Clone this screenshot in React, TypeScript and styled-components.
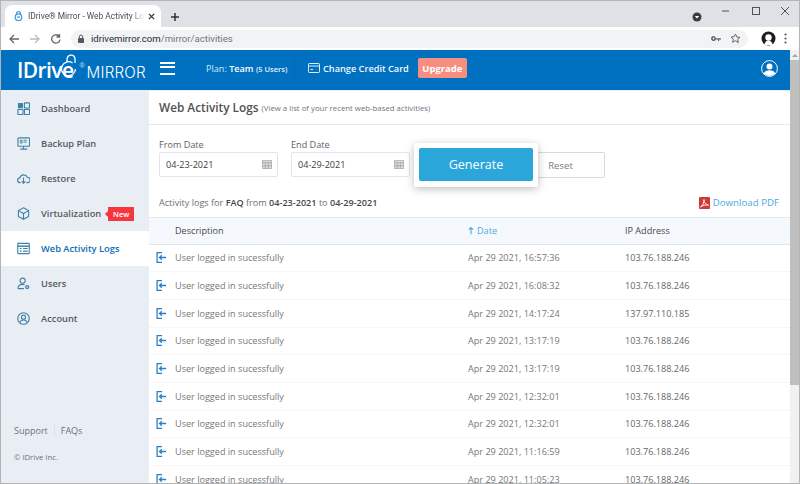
import React from 'react';
import styled, { createGlobalStyle } from 'styled-components';

const Global = createGlobalStyle`
	html, body {
		margin: 0;
		padding: 0;
		height: 484px;
		overflow: hidden;
		background: #fff;
	}
	* {
		box-sizing: border-box;
	}
`;

const Window = styled.div`
	width: 800px;
	height: 484px;
	display: flex;
	flex-direction: column;
	border: 1px solid #b4b4b4;
	font-family: 'Open Sans', sans-serif;
	overflow: hidden;
`;

const TabStrip = styled.div`
	height: 26px;
	flex: none;
	background: #dee1e6;
	display: flex;
	align-items: flex-end;
	padding-left: 4px;
	color: #3c4043;
`;

const Tab = styled.div`
	width: 156px;
	height: 22px;
	background: #fff;
	border-radius: 7px 7px 0 0;
	display: flex;
	align-items: center;
	padding: 0 6px 0 9px;
	font: 8.4px Roboto, sans-serif;
	color: #4a4d50;
`;

const TabTitle = styled.span`
	flex: 1;
	margin: 0 3px 0 5px;
	white-space: nowrap;
	overflow: hidden;
	mask-image: linear-gradient(to right, #000 88%, transparent);
`;

const NewTab = styled.svg`
	margin-left: 9px;
	margin-bottom: 5px;
`;

const WindowControls = styled.div`
	margin-left: auto;
	align-self: stretch;
	display: flex;
	align-items: flex-start;
	padding: 4px 8px 0 0;
	gap: 17px;
`;

const ProfileDot = styled.svg`
	margin: 7px 2px 0 0;
`;

const Toolbar = styled.div`
	height: 23px;
	flex: none;
	background: #fff;
	display: flex;
	align-items: center;
	padding: 0 7px 0 7px;
`;

const NavIcons = styled.div`
	display: flex;
	gap: 9px;
	width: 63px;
	flex: none;
`;

const Omnibox = styled.div`
	width: 677px;
	height: 18px;
	border-radius: 9px;
	background: #f1f3f4;
	display: flex;
	align-items: center;
	padding: 0 7px 0 6px;
	font: 9.6px Roboto, sans-serif;
	color: #70757a;
`;

const Url = styled.span`
	margin-left: 6px;
	b {
		font-weight: 400;
		color: #27292c;
	}
`;

const OmniIcons = styled.div`
	margin-left: auto;
	display: flex;
	align-items: center;
	gap: 9px;
`;

const ToolEnd = styled.div`
	margin-left: 13px;
	display: flex;
	align-items: center;
	gap: 8px;
`;

const Main = styled.div`
	flex: 1;
	min-height: 0;
	display: flex;
`;

const Page = styled.div`
	width: 789px;
	flex: none;
	display: flex;
	flex-direction: column;
`;

const Scrollbar = styled.div`
	flex: 1;
	background: #f1f1f1;
	display: flex;
	flex-direction: column;
	align-items: center;
`;

const ScrollUp = styled.div`
	height: 10px;
	flex: none;
	display: flex;
	align-items: center;
	justify-content: center;
	&::before {
		content: '';
		border-left: 3px solid transparent;
		border-right: 3px solid transparent;
		border-bottom: 3px solid #a3a3a3;
	}
`;

const ScrollThumb = styled.div`
	width: 100%;
	height: 325px;
	background: #bfbfbf;
`;

const Header = styled.header`
	height: 40px;
	flex: none;
	background: #0070c0;
	display: flex;
	align-items: center;
	color: #fff;
	padding: 0 12px 4px 0;
`;

const Logo = styled.div`
	width: 159px;
	flex: none;
	margin-top: 4px;
	padding-left: 16px;
	display: flex;
	align-items: baseline;
	white-space: nowrap;
`;

const LogoMark = styled.span`
	font: 600 21px 'Open Sans', sans-serif;
	letter-spacing: -0.6px;
	position: relative;
`;

const LogoLock = styled.svg`
	position: absolute;
	right: -4px;
	top: -2px;
`;

const LogoReg = styled.sup`
	font: 400 7px 'Liberation Sans', sans-serif;
	align-self: flex-start;
	margin: 6px 2px 0 6px;
	color: #cfe3f3;
`;

const LogoName = styled.span`
	font: 300 15.2px 'Inter', sans-serif;
	letter-spacing: 0.2px;
`;

const Burger = styled.button`
	width: 15px;
	height: 13px;
	padding: 0;
	border: 0;
	border-top: 2px solid #fff;
	border-bottom: 2px solid #fff;
	background: none;
	position: relative;
	flex: none;
	&::before {
		content: '';
		position: absolute;
		left: 0;
		right: 0;
		top: 2.5px;
		height: 2px;
		background: #fff;
	}
`;

const Plan = styled.div`
	margin-left: 31px;
	width: 88px;
	font-size: 9.1px;
	color: #d9e9f6;
	white-space: nowrap;
	strong {
		color: #fff;
		font-weight: 600;
	}
	small {
		font-size: 7.5px;
		font-weight: 600;
		color: #e6f0f9;
	}
`;

const Divider = styled.div`
	width: 1px;
	height: 26px;
	background: #0a66ac;
	flex: none;
`;

const CardLink = styled.a`
	margin-left: 13px;
	display: flex;
	align-items: center;
	gap: 3px;
	font-size: 9.2px;
	font-weight: 600;
	color: #f3f8fc;
	white-space: nowrap;
`;

const Upgrade = styled.button`
	margin-left: 9px;
	width: 49px;
	height: 20px;
	padding: 0;
	border: 0;
	border-radius: 2px;
	background: #f78e7f;
	color: #fff;
	font: 700 9.5px 'Open Sans', sans-serif;
`;

const UserButton = styled.div`
	margin-left: auto;
	display: flex;
`;

const Body = styled.div`
	flex: 1;
	min-height: 0;
	display: flex;
`;

const Sidebar = styled.nav`
	width: 148px;
	flex: none;
	background: #e9eef4;
	display: flex;
	flex-direction: column;
	padding-top: 1px;
`;

const NavItem = styled.a<{ $active?: boolean }>`
	height: 35px;
	flex: none;
	display: flex;
	align-items: center;
	padding-left: 16px;
	gap: 11px;
	font-size: 9.3px;
	font-weight: 600;
	background: ${p => (p.$active ? '#fff' : 'transparent')};
	color: ${p => (p.$active ? '#0a6cb5' : '#55595d')};
`;

const NavIcon = styled.svg`
	width: 13px;
	height: 13px;
	flex: none;
	fill: none;
	stroke: #3f82a8;
	stroke-width: 1.2;
`;

const NewBadge = styled.span`
	margin-left: -4px;
	width: 26px;
	height: 14px;
	background: #f8363f;
	color: #fff;
	font-size: 7.5px;
	font-weight: 600;
	display: flex;
	align-items: center;
	justify-content: center;
	position: relative;
	&::before {
		content: '';
		position: absolute;
		left: -3px;
		top: 4px;
		border-top: 3px solid transparent;
		border-bottom: 3px solid transparent;
		border-right: 3px solid #f8363f;
	}
`;

const SideFoot = styled.div`
	margin-top: auto;
	padding: 0 0 21px 13px;
	color: #6d7276;
`;

const FootLinks = styled.div`
	display: flex;
	align-items: center;
	font-size: 9px;
	margin-bottom: 15px;
`;

const FootLink = styled.a`
	& + & {
		margin-left: 6px;
		padding-left: 6px;
		border-left: 1px solid #dde2e8;
	}
`;

const Copy = styled.div`
	font-size: 7.7px;
`;

const Content = styled.main`
	flex: 1;
	min-width: 0;
	position: relative;
	overflow: hidden;
	display: flex;
	flex-direction: column;
`;

const TitleBar = styled.div`
	height: 35px;
	flex: none;
	border-top: 1px solid #e9eef4;
	border-bottom: 1px solid #e2e9f0;
	padding: 0 0 2px 10px;
	display: flex;
	align-items: center;
	gap: 3px;
`;

const Title = styled.h1`
	margin: 0;
	font-size: 11.8px;
	font-weight: 600;
	color: #4f5154;
`;

const Subtitle = styled.span`
	font-size: 7.8px;
	color: #70757a;
	margin-top: 2px;
`;

const Filters = styled.div`
	flex: none;
	display: flex;
	align-items: flex-end;
	gap: 13px;
	padding: 13px 0 0 10px;
`;

const Field = styled.label`
	display: flex;
	flex-direction: column;
	font-size: 9.1px;
	line-height: 14px;
	color: #5d6165;
`;

const DateBox = styled.div`
	width: 119px;
	height: 25px;
	border: 1px solid #dfe6ee;
	border-radius: 2px;
	padding: 0 5px 0 6px;
	display: flex;
	align-items: center;
	justify-content: space-between;
	font-size: 9.1px;
	color: #3d4043;
`;

const Reset = styled.button`
	width: 89px;
	height: 26px;
	margin-left: 93px;
	margin-bottom: -1px;
	padding: 0;
	border: 1px solid #d5dae0;
	border-radius: 2px;
	background: #fff;
	color: #7c8084;
	font: 9.6px 'Open Sans', sans-serif;
`;

const Spotlight = styled.div`
	position: absolute;
	left: 265px;
	top: 53px;
	width: 124px;
	height: 44px;
	background: #fff;
	box-shadow: 0 2px 8px rgba(0, 0, 0, 0.25);
	padding: 5px;
`;

const Generate = styled.button`
	width: 114px;
	height: 33px;
	border: 0;
	padding: 0;
	border-radius: 2px;
	background: #2ba6db;
	color: #fff;
	font: 12.6px 'Open Sans', sans-serif;
`;

const Summary = styled.div`
	flex: none;
	display: flex;
	align-items: center;
	justify-content: space-between;
	height: 17px;
	margin-top: 17px;
	padding: 0 11px 0 10px;
	font-size: 9.1px;
	color: #6b6f73;
	b {
		font-weight: 600;
		color: #45484b;
	}
`;

const Download = styled.a`
	display: flex;
	align-items: center;
	gap: 3px;
	font-size: 9.7px;
	color: #4ea9dd;
`;

const Table = styled.div`
	flex: none;
	margin-top: 6px;
	display: flex;
	flex-direction: column;
`;

const columns = `
	display: grid;
	grid-template-columns: 26px 293px 157px 1fr;
	align-items: center;
`;

const HeadRow = styled.div`
	${columns}
	height: 27.5px;
	flex: none;
	background: #f5f8fd;
	border-top: 1px solid #e2e8ef;
	border-bottom: 1px solid #dfe5ec;
	font-size: 9.1px;
	color: #45484b;
`;

const SortHead = styled.span`
	display: flex;
	align-items: center;
	gap: 3px;
	color: #4ea9dd;
`;

const Row = styled.div`
	${columns}
	height: 27.7px;
	flex: none;
	border-bottom: 1px solid #f5f6f7;
	font-size: 9.1px;
	color: #74787c;
`;

const LoginIcon = styled.svg`
	margin-left: 7px;
`;

const IpCell = styled.span`
	color: #63676b;
`;

const navItems = [
	{
		label: 'Dashboard',
		icon: (
			<g fill="#3f82a8" stroke="none">
				<rect x="1" y="1" width="5.5" height="5.5" rx=".6" />
				<rect x="8" y="1" width="5.5" height="5.5" rx=".6" fill="none" stroke="#3f82a8" />
				<rect x="1" y="8" width="5.5" height="5.5" rx=".6" fill="none" stroke="#3f82a8" />
				<rect x="8" y="8" width="5.5" height="5.5" rx=".6" fill="none" stroke="#3f82a8" />
			</g>
		),
	},
	{
		label: 'Backup Plan',
		icon: (
			<>
				<rect x="1" y="1" width="12.5" height="9" rx=".8" />
				<path d="M3.500 13h7.500M7 10v3" />
				<path d="M3.500 3.500h2v3h-2zM7 3.500h3.500M7 5.500h3.500" strokeWidth="1" />
			</>
		),
	},
	{
		label: 'Restore',
		icon: (
			<>
				<path d="M4 11.500H3.400a2.600 2.600 0 0 1-.3-5.200 4.200 4.200 0 0 1 8-.6 2.900 2.900 0 0 1 .2 5.800H10" />
				<path d="M7 6v6M5 10l2 2 2-2" />
			</>
		),
	},
	{
		label: 'Virtualization',
		icon: (
			<>
				<path d="M7 .9l5.500 3v6.200L7 13.200l-5.500-3.100V3.900z" />
				<path d="M1.500 3.900L7 7l5.500-3.100M7 7v6.200" />
			</>
		),
	},
	{
		label: 'Web Activity Logs',
		active: true,
		icon: (
			<>
				<rect x=".8" y="1.500" width="12.400" height="11" rx=".6" />
				<path d="M.8 4.500h12.400" strokeWidth="1.600" />
				<path d="M3 7h2M6.500 7h5M3 9.800h2M6.500 9.800h5" />
			</>
		),
	},
	{
		label: 'Users',
		icon: (
			<>
				<circle cx="6" cy="4" r="2.800" />
				<path d="M1 12.500c0-3 2-4.500 5-4.500 1 0 1.600.1 2.200.4M1 12.500h6.500" />
				<circle cx="11" cy="10.800" r="1.600" strokeWidth="1.400" />
			</>
		),
	},
	{
		label: 'Account',
		icon: (
			<>
				<circle cx="7" cy="7" r="6.200" />
				<circle cx="7" cy="5.600" r="2.200" />
				<path d="M3 11.500c.6-2 2-2.900 4-2.900s3.400.9 4 2.900" />
			</>
		),
	},
];

const logs = [
	['Apr 29 2021, 16:57:36', '103.76.188.246'],
	['Apr 29 2021, 16:08:32', '103.76.188.246'],
	['Apr 29 2021, 14:17:24', '137.97.110.185'],
	['Apr 29 2021, 13:17:19', '103.76.188.246'],
	['Apr 29 2021, 13:17:19', '103.76.188.246'],
	['Apr 29 2021, 12:32:01', '103.76.188.246'],
	['Apr 29 2021, 12:32:01', '103.76.188.246'],
	['Apr 29 2021, 11:16:59', '103.76.188.246'],
	['Apr 29 2021, 11:05:23', '103.76.188.246'],
];

const CalendarIcon = () => (
	<svg width="10" height="9" viewBox="0 0 11 10">
		<rect x=".5" y=".5" width="10" height="9" fill="#dcdddd" stroke="#b4b6b8" />
		<path d="M0 3h11M3.500 3v7M7 3v7M0 6.500h11" stroke="#9b9d9f" strokeWidth=".8" />
	</svg>
);

const App = () => (
	<>
		<Global />
		<Window>
			<TabStrip>
				<Tab>
					<svg width="9" height="12" viewBox="0 0 11 14" fill="none" stroke="#3d9be0" strokeWidth="1.500">
						<circle cx="5.500" cy="8.500" r="4" />
						<path d="M3 4.500c0-4 5-4 5 0M3.500 8.500h4" />
					</svg>
					<TabTitle>IDrive® Mirror - Web Activity Log</TabTitle>
					<svg width="7" height="7" viewBox="0 0 8 8" stroke="#33373a" strokeWidth="1.500">
						<path d="M1 1l6 6M7 1l-6 6" />
					</svg>
				</Tab>
				<NewTab width="10" height="10" viewBox="0 0 10 10" stroke="#2f3235" strokeWidth="1.500">
					<path d="M5 1v8M1 5h8" />
				</NewTab>
				<WindowControls>
					<ProfileDot width="10" height="10" viewBox="0 0 10 10">
						<circle cx="5" cy="5" r="4.500" fill="#3a3d40" />
						<path d="M2.800 4h4.400L5 6.500z" fill="#fff" />
					</ProfileDot>
					<svg width="12" height="12" viewBox="0 0 12 12" stroke="#50545a">
						<path d="M1 6h7" />
					</svg>
					<svg width="12" height="12" viewBox="0 0 12 12" fill="none" stroke="#50545a">
						<rect x="2.500" y="2.500" width="7" height="7" />
					</svg>
					<svg width="12" height="12" viewBox="0 0 12 12" stroke="#50545a">
						<path d="M2 2l8 8M10 2l-8 8" />
					</svg>
				</WindowControls>
			</TabStrip>
			<Toolbar>
				<NavIcons>
					<svg width="12" height="12" viewBox="0 0 12 12" fill="none" stroke="#63676b" strokeWidth="1.300">
						<path d="M11 6H2M6 2L2 6l4 4" />
					</svg>
					<svg width="12" height="12" viewBox="0 0 12 12" fill="none" stroke="#b9bcbf" strokeWidth="1.300">
						<path d="M1 6h9M6 2l4 4-4 4" />
					</svg>
					<svg width="12" height="12" viewBox="0 0 12 12" fill="none" stroke="#63676b" strokeWidth="1.300">
						<path d="M10 6.500A4.200 4.200 0 1 1 8.800 3M9.500 1v3h-3" />
					</svg>
				</NavIcons>
				<Omnibox>
					<svg width="8" height="10" viewBox="0 0 8 10">
						<rect x="1" y="4" width="6" height="5" rx=".7" fill="#55595d" />
						<path d="M2.300 4V2.800a1.700 1.700 0 0 1 3.400 0V4" fill="none" stroke="#55595d" />
					</svg>
					<Url>
						<b>idrivemirror.com</b>/mirror/activities
					</Url>
					<OmniIcons>
						<svg width="10" height="6" viewBox="0 0 10 6" fill="#5f6368">
							<path d="M2.500 0a2.500 2.500 0 1 0 2.300 3.500H7V5h1.200V3.500H10V2.300H4.800A2.500 2.500 0 0 0 2.500 0zm0 1.600a.9.900 0 1 1 0 1.800.9.900 0 0 1 0-1.800z" />
						</svg>
						<svg width="11" height="11" viewBox="0 0 12 12" fill="none" stroke="#55595d" strokeWidth="1">
							<path d="M6 1.200l1.500 3.200 3.400.4-2.500 2.300.7 3.400L6 8.400l-3.100 1.700.7-3.400-2.500-2.300 3.400-.4z" />
						</svg>
					</OmniIcons>
				</Omnibox>
				<ToolEnd>
					<svg width="15" height="15" viewBox="0 0 15 15">
						<circle cx="7.500" cy="7.500" r="7" fill="#1f1f1f" />
						<circle cx="7.500" cy="6.500" r="3.200" fill="#fff" />
						<path d="M3.500 14c0-3 2-4.500 4-4.500s4 1.500 4 4.500z" fill="#fff" />
					</svg>
					<svg width="3" height="11" viewBox="0 0 3 11" fill="#55595d">
						<circle cx="1.500" cy="1.500" r="1.100" />
						<circle cx="1.500" cy="5.500" r="1.100" />
						<circle cx="1.500" cy="9.500" r="1.100" />
					</svg>
				</ToolEnd>
			</Toolbar>
			<Main>
				<Page>
					<Header>
						<Logo>
							<LogoMark>
								IDrive
								<LogoLock width="16" height="24" viewBox="0 0 16 24" fill="none" stroke="#fff" strokeWidth="1.300">
									<path d="M6 8V5.500C6 2.500 8 1.200 10 1.200s4 1.300 4 4.300V9" />
									<path d="M14.500 15a7 7 0 1 1-3-6" />
								</LogoLock>
							</LogoMark>
							<LogoReg>®</LogoReg>
							<LogoName>MIRROR</LogoName>
						</Logo>
						<Burger aria-label="menu" />
						<Plan>
							Plan: <strong>Team</strong> <small>(5 Users)</small>
						</Plan>
						<Divider />
						<CardLink>
							<svg width="12" height="10" viewBox="0 0 12 10" fill="none" stroke="#dceaf5">
								<rect x=".5" y=".5" width="11" height="9" rx=".7" />
								<path d="M.5 3h11M2.500 6.500h2.500" />
							</svg>
							Change Credit Card
						</CardLink>
						<Upgrade>Upgrade</Upgrade>
						<UserButton>
							<svg width="17" height="17" viewBox="0 0 17 17">
								<circle cx="8.500" cy="8.500" r="7.900" fill="none" stroke="#fff" />
								<circle cx="8.500" cy="6.500" r="3" fill="#fff" />
								<path d="M2.800 13.500c.8-2.500 3-3.300 5.700-3.300s4.900.8 5.700 3.300a7.900 7.900 0 0 1-11.400 0z" fill="#fff" />
							</svg>
						</UserButton>
					</Header>
					<Body>
						<Sidebar>
							{navItems.map(item => (
								<NavItem key={item.label} $active={item.active}>
									<NavIcon viewBox="0 0 14 14">{item.icon}</NavIcon>
									{item.label}
									{item.label === 'Virtualization' && <NewBadge>New</NewBadge>}
								</NavItem>
							))}
							<SideFoot>
								<FootLinks>
									<FootLink>Support</FootLink>
									<FootLink>FAQs</FootLink>
								</FootLinks>
								<Copy>© IDrive Inc.</Copy>
							</SideFoot>
						</Sidebar>
						<Content>
							<TitleBar>
								<Title>Web Activity Logs</Title>
								<Subtitle>(View a list of your recent web-based activities)</Subtitle>
							</TitleBar>
							<Filters>
								<Field>
									From Date
									<DateBox>
										04-23-2021
										<CalendarIcon />
									</DateBox>
								</Field>
								<Field>
									End Date
									<DateBox>
										04-29-2021
										<CalendarIcon />
									</DateBox>
								</Field>
								<Reset>Reset</Reset>
							</Filters>
							<Spotlight>
								<Generate>Generate</Generate>
							</Spotlight>
							<Summary>
								<span>
									Activity logs for <b>FAQ</b> from <b>04-23-2021</b> to <b>04-29-2021</b>
								</span>
								<Download>
									<svg width="11" height="12" viewBox="0 0 11 12">
										<rect width="11" height="12" rx="1" fill="#d13b36" />
										<path d="M1.500 10c2-1 3.500-4 3.500-7.500 0 3 1.500 5 4.500 5.500-3-.3-6 .4-8 2z" fill="none" stroke="#fff" strokeWidth=".9" />
									</svg>
									Download PDF
								</Download>
							</Summary>
							<Table>
								<HeadRow>
									<span />
									<span>Description</span>
									<SortHead>
										<svg width="6" height="9" viewBox="0 0 7 9" fill="none" stroke="#4ea9dd" strokeWidth="1.300">
											<path d="M3.500 9V1M1 3.500L3.500 1 6 3.500" />
										</svg>
										Date
									</SortHead>
									<span>IP Address</span>
								</HeadRow>
								{logs.map(([date, ip], i) => (
									<Row key={i}>
										<LoginIcon width="11" height="11" viewBox="0 0 11 12" fill="none" stroke="#2a7fc4" strokeWidth="1.400">
											<path d="M6 .7H.7v10.600H6" />
											<path d="M10.500 6H3.500M5.800 3.500L3.300 6l2.500 2.500" />
										</LoginIcon>
										<span>User logged in sucessfully</span>
										<span>{date}</span>
										<IpCell>{ip}</IpCell>
									</Row>
								))}
							</Table>
						</Content>
					</Body>
				</Page>
				<Scrollbar>
					<ScrollUp />
					<ScrollThumb />
				</Scrollbar>
			</Main>
		</Window>
	</>
);

export default App;
